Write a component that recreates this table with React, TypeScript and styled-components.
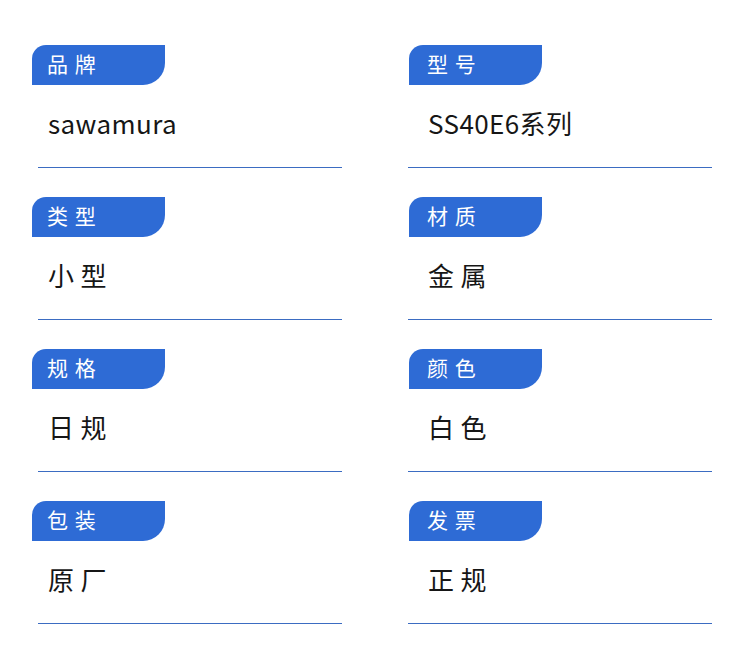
import React from "react";
import styled, { createGlobalStyle } from "styled-components";

const Global = createGlobalStyle`
  html, body { margin: 0; padding: 0; background: #ffffff; }
  body { font-family: "Noto Sans CJK SC", "Noto Sans", sans-serif; }
`;

const Page = styled.div`
  width: 750px;
  height: 665px;
  box-sizing: border-box;
  padding: 45px 0 0 32px;
  display: grid;
  grid-template-columns: 377px 341px;
  grid-auto-rows: 152px;
  background: #ffffff;
`;

const Cell = styled.div<{ $side: "left" | "right" }>`
  display: flex;
  flex-direction: column;
  align-items: flex-start;
  --text-pad: ${(p) => (p.$side === "left" ? "15px" : "18px")};
  --line-pad: ${(p) => (p.$side === "left" ? "6px" : "-1px")};
`;

const Tag = styled.div`
  width: 133px;
  height: 40px;
  box-sizing: border-box;
  padding-left: var(--text-pad);
  background: #2e6bd5;
  border-radius: 14px 0 22px 0;
  color: #ffffff;
  font-size: 21px;
  line-height: 37px;
  letter-spacing: 1px;
  white-space: pre;
`;

const Value = styled.div`
  height: 82px;
  box-sizing: border-box;
  padding-left: calc(var(--text-pad) + 1px);
  padding-bottom: 7px;
  display: flex;
  align-items: center;
  color: #161616;
  font-size: 26px;
  letter-spacing: 0.4px;
  white-space: pre;
`;

const Rule = styled.div`
  margin-left: var(--line-pad);
  width: 304px;
  height: 1px;
  background: #3b6cc2;
`;

const items: { label: string; value: string }[] = [
  { label: "品 牌", value: "sawamura" },
  { label: "型 号", value: "SS40E6系列" },
  { label: "类 型", value: "小 型" },
  { label: "材 质", value: "金 属" },
  { label: "规 格", value: "日 规" },
  { label: "颜 色", value: "白 色" },
  { label: "包 装", value: "原 厂" },
  { label: "发 票", value: "正 规" },
];

export default function App() {
  return (
    <>
      <Global />
      <Page>
        {items.map((it, i) => (
          <Cell key={it.label} $side={i % 2 === 0 ? "left" : "right"}>
            <Tag>{it.label}</Tag>
            <Value>{it.value}</Value>
            <Rule />
          </Cell>
        ))}
      </Page>
    </>
  );
}
